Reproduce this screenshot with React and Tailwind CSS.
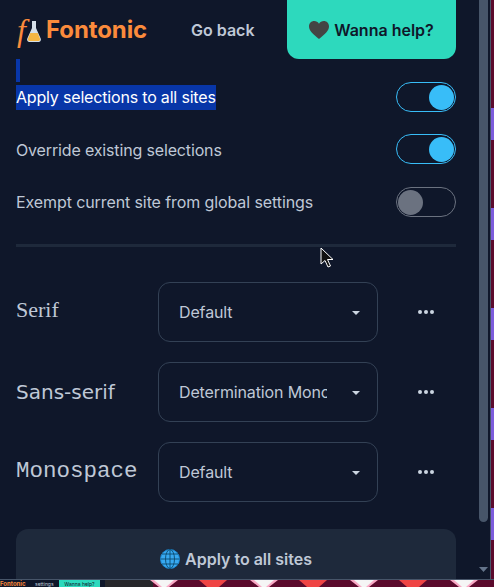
import React from 'react'

function Toggle({ on }) {
  return (
    <div
      className={`w-[60px] h-[30px] rounded-full border p-[1px] flex items-center ${
        on ? 'border-[#38bdf8] justify-end' : 'border-[#6b7280] justify-start'
      }`}
    >
      <div className={`w-[25px] h-[25px] rounded-full ${on ? 'bg-[#38bdf8]' : 'bg-[#6b7280]'}`} />
    </div>
  )
}

function FontRow({ label, labelClass, value }) {
  return (
    <div className="flex items-center h-[60px]">
      <div className={`w-[142px] shrink-0 text-[#bfc8d6] ${labelClass}`}>{label}</div>
      <div className="w-[220px] h-[60px] shrink-0 rounded-xl border border-[#334155] flex items-center pl-5 pr-[17px]">
        <span className="w-[148px] overflow-hidden whitespace-nowrap text-base tracking-[-0.13px] text-[#bfc8d6]">{value}</span>
        <svg width="8" height="4" viewBox="0 0 8 4" className="ml-auto mt-0.5">
          <path d="M0 0h8L4 4z" fill="#cbd5e1" />
        </svg>
      </div>
      <div className="flex-1 flex justify-center pl-[18px]">
        <svg width="16" height="4" viewBox="0 0 16 4">
          <circle cx="2" cy="2" r="2" fill="#cbd5e1" />
          <circle cx="8" cy="2" r="2" fill="#cbd5e1" />
          <circle cx="14" cy="2" r="2" fill="#cbd5e1" />
        </svg>
      </div>
    </div>
  )
}

function Flask() {
  return (
    <svg width="14" height="21" viewBox="0 0 14 21" className="shrink-0 mt-[3px]">
      <path d="M5 0h4v7l4.700 10.500c.6 1.800-.3 3.500-2 3.500H2.300c-1.700 0-2.600-1.700-2-3.500L5 7z" fill="#d5dfe9" />
      <path d="M3.300 12h7.400l2.200 5.600c.4 1.300-.2 2.400-1.400 2.400H2.500c-1.200 0-1.800-1.100-1.400-2.400z" fill="#f5b642" />
    </svg>
  )
}

function Heart() {
  return (
    <svg width="20" height="18" viewBox="0 0 20 18" className="mr-[5px]">
      <path d="M10 18C4 13 0 10 0 5.300 0 2.200 2.300 0 5.200 0 7.200 0 9 1 10 2.700 11 1 12.800 0 14.800 0 17.700 0 20 2.200 20 5.300 20 10 16 13 10 18z" fill="#444444" />
    </svg>
  )
}

function Globe() {
  return (
    <svg width="20" height="20" viewBox="0 0 20 20" className="mr-[5px]" fill="none" stroke="#0c4a6e" strokeWidth="0.9">
      <circle cx="10" cy="10" r="9.500" fill="#38a9f0" stroke="#1d8fdc" />
      <ellipse cx="10" cy="10" rx="4.500" ry="9.500" />
      <path d="M10 .5v19M.5 10h19M2 5h16M2 15h16" />
    </svg>
  )
}

function Cursor() {
  return (
    <svg width="14" height="22" viewBox="0 0 14 22" className="absolute left-[320px] top-[247px]">
      <path d="M1 1v16l4-3.500 3 6.500 2.500-1-3-6.500H13z" fill="#111" stroke="#fff" strokeWidth="1" />
    </svg>
  )
}

function Wallpaper() {
  const whites = [150, 250, 350, 450]
  const reds = [199, 299, 399]
  return (
    <svg className="flex-1 h-[7px]" viewBox="105 0 389 7" preserveAspectRatio="none">
      <rect x="105" y="0" width="48" height="7" fill="#27272a" />
      <rect x="153" y="0" width="341" height="7" fill="#5b0a2c" />
      {whites.map((x) => (
        <g key={x}>
          <path d={`M${x} 0h28l-9 7h-10z`} fill="#f9a8c4" />
          <path d={`M${x + 4} 0h20l-8 7h-4z`} fill="#f5f5f5" />
        </g>
      ))}
      {reds.map((x) => (
        <path key={x} d={`M${x} 0h28l-8 7h-12z`} fill="#ef4444" />
      ))}
    </svg>
  )
}

function SideStrip() {
  return (
    <div className="w-[3px] h-full bg-[#5b0a2c] flex flex-col">
      {[0, 1, 2, 3, 4].map((i) => (
        <div key={i} className="h-[100px] pt-[8px]">
          <div className="h-[32px] mt-[100px] -mb-[100px] bg-[#7c5cdb]" />
        </div>
      ))}
    </div>
  )
}

export default function App() {
  return (
    <div className="relative w-[494px] h-[587px] overflow-hidden bg-[#5b0a2c] font-['Inter',sans-serif]">
      <div className="flex h-[579px]">
        <div className="w-[491px] shrink-0 flex bg-[#0f172a] border-r border-[#475569]">
          <div className="w-[479px] shrink-0 h-[579px] overflow-hidden px-4">
            {/* header */}
            <div className="flex items-center h-[59px] w-[440px]">
              <div className="flex items-center w-[175px] pl-[1px] text-[#fb8b3c]">
                <span className="w-[10px] font-['Liberation_Serif',serif] italic text-[32px] leading-none">f</span>
                <Flask />
                <span className="ml-[5px] font-bold text-[24px] tracking-[-0.1px]">Fontonic</span>
              </div>
              <span className="text-base font-semibold text-[#bfc8d6]">Go back</span>
              <div className="ml-auto w-[169px] h-[59px] rounded-b-xl bg-[#2dd9bd] flex items-center justify-center text-base font-semibold text-[#0f172a]">
                <Heart />
                Wanna help?
              </div>
            </div>

            <div className="w-1 h-[23px] bg-[#0836a8]" />

            {/* toggles */}
            <div className="flex items-center justify-between h-[30px] w-[440px] tracking-[-0.18px]">
              <span className="bg-[#0836a8] text-white text-base leading-[25px]">Apply selections to all sites</span>
              <Toggle on />
            </div>
            <div className="flex items-center justify-between h-[30px] w-[440px] mt-[22px] text-base tracking-[-0.15px] text-[#bfc8d6]">
              <span className="pt-[1px]">Override existing selections</span>
              <Toggle on />
            </div>
            <div className="flex items-center justify-between h-[30px] w-[440px] mt-[23px] text-base tracking-[-0.1px] text-[#bfc8d6]">
              <span>Exempt current site from global settings</span>
              <Toggle />
            </div>

            <div className="w-[440px] h-[3px] bg-[#1e293b] mt-[27px]" />

            {/* font selects */}
            <div className="w-[440px] mt-[35px] flex flex-col gap-5">
              <FontRow label="Serif" value="Default" labelClass="font-['Liberation_Serif',serif] text-[22px] pb-[5px]" />
              <FontRow label="Sans-serif" value="Determination Mono" labelClass="font-['DejaVu_Sans',sans-serif] text-[20px]" />
              <FontRow label="Monospace" value="Default" labelClass="font-['Liberation_Mono',monospace] text-[22.500px]" />
            </div>

            <div className="w-[440px] h-[60px] mt-[27px] rounded-t-xl bg-[#1e293b] flex items-center justify-center text-base font-semibold text-[#bfc8d6]">
              <Globe />
              Apply to all sites
            </div>
          </div>

          {/* scrollbar */}
          <div className="w-[11px] shrink-0 flex flex-col">
            <div className="w-[9px] h-[522px] rounded-b-full bg-[#475569]" />
            <svg width="9" height="5" viewBox="0 0 9 5" className="mt-[45px]">
              <path d="M0 0h9L4.500 5z" fill="#64748b" />
            </svg>
          </div>
        </div>
        <SideStrip />
      </div>

      {/* page behind the popup */}
      <div className="flex h-2 overflow-hidden border-t border-[#475569]">
        <div className="w-[105px] shrink-0 h-[7px] bg-[#0f172a] flex overflow-hidden leading-[8px] whitespace-nowrap">
          <span className="w-[35px] text-[6px] font-bold text-[#fb8b3c]">Fontonic</span>
          <span className="w-[24px] text-[5px] text-[#bfc8d6]">settings</span>
          <span className="w-[41px] bg-[#2dd9bd] text-[#0f172a] text-center text-[5px]">Wanna help?</span>
        </div>
        <Wallpaper />
      </div>

      <Cursor />
    </div>
  )
}
